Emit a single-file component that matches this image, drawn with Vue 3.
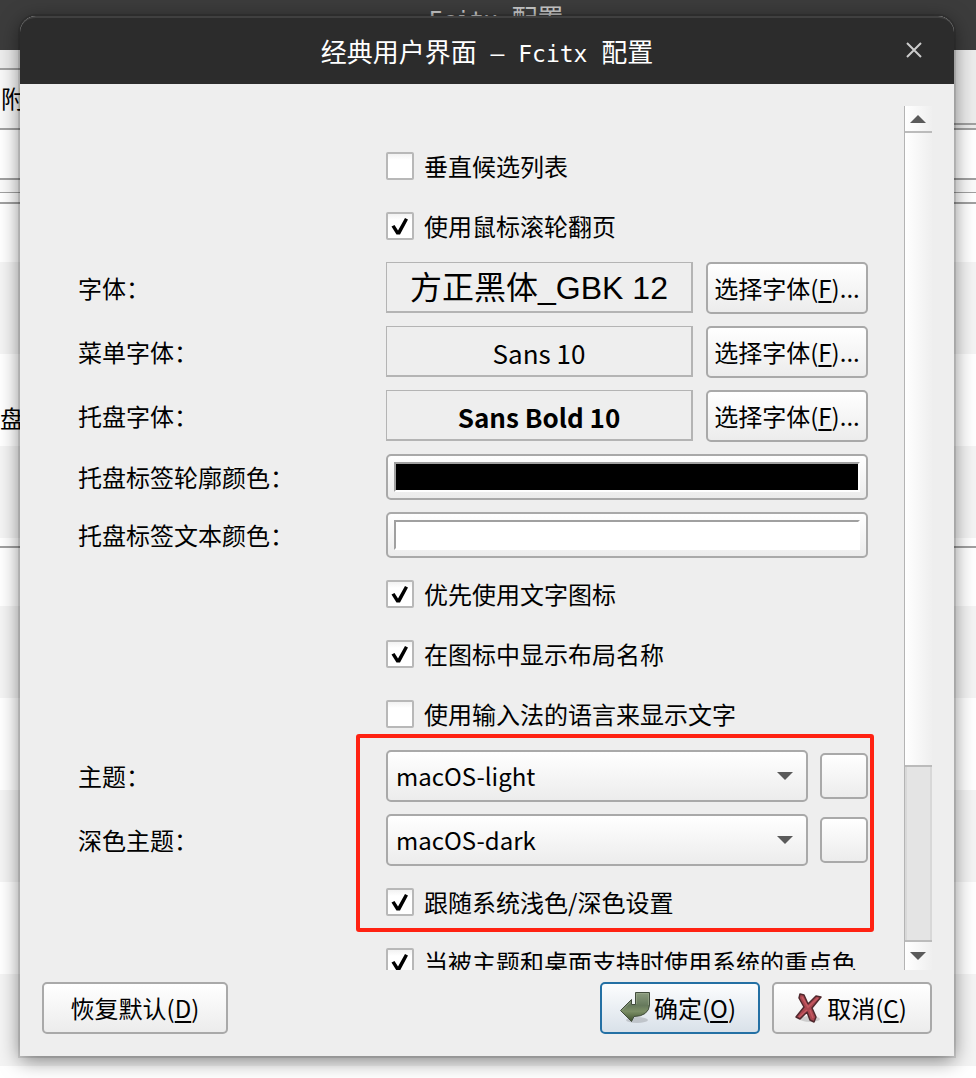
<script setup>
import { ref } from 'vue'

const topChecks = ref([
  { id: 'vertical', label: '垂直候选列表', on: false },
  { id: 'wheel', label: '使用鼠标滚轮翻页', on: true },
])
const fonts = [
  { id: 'font', label: '字体：', value: '方正黑体_GBK 12', kind: 'large' },
  { id: 'menu-font', label: '菜单字体：', value: 'Sans 10', kind: 'normal' },
  { id: 'tray-font', label: '托盘字体：', value: 'Sans Bold 10', kind: 'bold' },
]
const colors = [
  { id: 'outline', label: '托盘标签轮廓颜色：', kind: 'black' },
  { id: 'text', label: '托盘标签文本颜色：', kind: 'white' },
]
const iconChecks = ref([
  { id: 'text-icon', label: '优先使用文字图标', on: true },
  { id: 'layout-name', label: '在图标中显示布局名称', on: true },
  { id: 'im-language', label: '使用输入法的语言来显示文字', on: false },
])
const themes = [
  { id: 'theme', label: '主题：', value: 'macOS-light' },
  { id: 'dark-theme', label: '深色主题：', value: 'macOS-dark' },
]
const follow = ref(true)
const accent = ref(true)
const stripes = ['', '', '', '']
</script>

<template>
  <div class="desktop">
    <div class="back" aria-hidden="true">
      <div class="back-title"><span class="latin">Fcitx </span>配置</div>
      <div class="back-top">
        <div class="back-tab">附</div>
        <div class="back-side"></div>
      </div>
      <div class="back-search"></div>
      <div class="back-gap"></div>
      <div class="back-list first">
        <div class="cell short"></div>
        <div class="cell"></div>
        <div class="cell"><span>盘</span></div>
        <div class="cell"></div>
      </div>
      <div class="back-list second">
        <div class="cell short"></div>
        <div v-for="(s, i) in stripes" :key="i" class="cell"></div>
        <div class="cell"></div>
      </div>
    </div>

    <section class="dialog" role="dialog" aria-labelledby="dialog-title">
      <header class="titlebar">
        <h1 id="dialog-title">经典用户界面<span class="latin"> – Fcitx </span>配置</h1>
        <button class="close" type="button" aria-label="关闭">
          <svg viewBox="0 0 18 18" width="18" height="18"><path d="M2 2 16 16M16 2 2 16" /></svg>
        </button>
      </header>

      <div class="body">
        <div class="scroll-area">
          <form class="form" @submit.prevent>
            <label v-for="c in topChecks" :key="c.id" class="check">
              <span class="box">
                <input v-model="c.on" type="checkbox" />
                <svg v-if="c.on" viewBox="0 0 28 28"><path d="M5.5 14.5 8.5 13 12 18.5 19 6 22 7.5 14 22.500H10.500Z" /></svg>
              </span>
              {{ c.label }}
            </label>

            <div v-for="f in fonts" :key="f.id" class="row">
              <label class="name" :for="f.id">{{ f.label }}</label>
              <div class="font-field">
                <output class="font-value" :class="f.kind">{{ f.value }}</output>
                <button :id="f.id" class="btn choose" type="button">选择字体(<u>F</u>)...</button>
              </div>
            </div>

            <div v-for="c in colors" :key="c.id" class="row">
              <label class="name" :for="c.id">{{ c.label }}</label>
              <button :id="c.id" class="btn color" type="button"><span class="swatch" :class="c.kind"></span></button>
            </div>

            <label v-for="c in iconChecks" :key="c.id" class="check">
              <span class="box">
                <input v-model="c.on" type="checkbox" />
                <svg v-if="c.on" viewBox="0 0 28 28"><path d="M5.5 14.5 8.5 13 12 18.5 19 6 22 7.5 14 22.500H10.500Z" /></svg>
              </span>
              {{ c.label }}
            </label>

            <div class="theme-group">
              <div v-for="t in themes" :key="t.id" class="row">
                <label class="name" :for="t.id">{{ t.label }}</label>
                <div class="theme-field">
                  <span class="combo">
                    <select :id="t.id" class="btn"><option>{{ t.value }}</option></select>
                    <svg viewBox="0 0 16 8" width="16" height="8"><path d="M0 0H16L8 8Z" /></svg>
                  </span>
                  <button class="btn square" type="button" aria-label="配置"></button>
                </div>
              </div>
              <label class="check">
                <span class="box">
                  <input v-model="follow" type="checkbox" />
                  <svg v-if="follow" viewBox="0 0 28 28"><path d="M5.5 14.5 8.5 13 12 18.5 19 6 22 7.5 14 22.500H10.500Z" /></svg>
                </span>
                跟随系统浅色/深色设置
              </label>
              <div class="highlight"></div>
            </div>

            <label class="check">
              <span class="box">
                <input v-model="accent" type="checkbox" />
                <svg v-if="accent" viewBox="0 0 28 28"><path d="M5.5 14.5 8.5 13 12 18.5 19 6 22 7.5 14 22.500H10.500Z" /></svg>
              </span>
              当被主题和桌面支持时使用系统的重点色
            </label>
          </form>

          <div class="scrollbar">
            <button type="button" class="arrow up" aria-label="向上滚动">
              <svg viewBox="0 0 16 8" width="16" height="8"><path d="M0 8H16L8 0Z" /></svg>
            </button>
            <div class="track"></div>
            <div class="thumb"></div>
            <button type="button" class="arrow down" aria-label="向下滚动">
              <svg viewBox="0 0 16 8" width="16" height="8"><path d="M0 0H16L8 8Z" /></svg>
            </button>
          </div>
        </div>

        <footer class="actions">
          <button class="btn restore" type="button">恢复默认(<u>D</u>)</button>
          <button class="btn action ok" type="button">
            <svg viewBox="0 0 32 32" width="32" height="32">
              <defs>
                <linearGradient id="ok-fill" x1="0" y1="0" x2="0" y2="1">
                  <stop offset="0" stop-color="#8b9c7f" />
                  <stop offset="0.45" stop-color="#66795c" />
                  <stop offset="0.65" stop-color="#7c8f66" />
                  <stop offset="1" stop-color="#3c4f2c" />
                </linearGradient>
              </defs>
              <ellipse cx="17" cy="28" rx="11" ry="3" fill="#000" opacity=".15" />
              <path d="M15.500 .5H29.500V13Q29.500 18 25 21.500Q21 24.500 14 24.500L11.500 29.500 .5 18.500 11.500 7.500V12.500H15.500Z" fill="url(#ok-fill)" stroke="#414c3c" />
              <path d="M16.500 12V1.500H28.500V13M10.500 10 2 18.500" fill="none" stroke="#a5b498" opacity=".5" />
            </svg>
            <span>确定(<u>O</u>)</span>
          </button>
          <button class="btn action" type="button">
            <svg viewBox="0 0 32 32" width="32" height="32">
              <ellipse cx="17" cy="27" rx="10" ry="3" fill="#000" opacity=".15" />
              <path d="M7 2 11 3 15 12 23 4 28 5 19 16 23 25 21 30 17 28 14 20 7 27 3 25 11 15 6 6Z" fill="#aa464f" stroke="#50282d" stroke-width="1.500" stroke-linejoin="round" />
              <path d="M9 5 15 15 25 6M14 18 6 25M17 18 20 26" fill="none" stroke="#c45a62" stroke-width="1.500" />
            </svg>
            <span>取消(<u>C</u>)</span>
          </button>
        </footer>
      </div>
    </section>
  </div>
</template>

<style>
body {
  margin: 0;
}
</style>

<style scoped>
* {
  box-sizing: border-box;
}
.desktop {
  position: relative;
  height: 100vh;
  padding: 16px 22px 22px 20px;
  overflow: hidden;
  color: #000;
  font-family: "Noto Sans CJK SC", sans-serif;
  font-size: 24px;
  line-height: 36px;
}
button,
select {
  color: inherit;
  font: inherit;
}

/* window behind the dialog */
.back {
  position: absolute;
  inset: 0;
  display: flex;
  flex-direction: column;
  background: #fff;
}
.back-title {
  height: 50px;
  padding-left: 16px;
  background: #3c3c3c;
  color: #c8c8c8;
  font-size: 26px;
  line-height: 34px;
  text-align: center;
}
.latin {
  font-family: "DejaVu Sans Mono", monospace;
  font-size: 23px;
  white-space: pre;
}
.back-top {
  display: flex;
  justify-content: space-between;
  height: 80px;
  background: #ececec;
  border-bottom: 2px solid #a0a0a0;
}
.back-tab {
  width: 60px;
  margin-top: 18px;
  padding: 10px 1px;
  background: #f8f8f8;
  border-top: 2px solid #a0a0a0;
}
.back-side {
  width: 60px;
  height: 75px;
  border-bottom: 2px solid #a0a0a0;
}
.back-search {
  height: 50px;
  background: #fff;
  border-bottom: 2px solid #a0a0a0;
}
.back-gap {
  height: 13px;
  background: #fafafa;
  border-bottom: 1px solid #a0a0a0;
}
.back-list.first {
  margin-top: 9px;
  height: 346px;
  border-top: 2px solid #a0a0a0;
  border-bottom: 2px solid #a0a0a0;
}
.cell {
  height: 92px;
}
.cell.short {
  height: 58px;
}
.cell:nth-child(even) {
  background: #f4f4f4;
}
.cell span {
  display: block;
  padding-top: 46px;
}

/* dialog frame */
.dialog {
  position: relative;
  display: flex;
  flex-direction: column;
  height: 100%;
  background: #eee;
  border-radius: 16px 16px 0 0;
  box-shadow: 0 0 0 2px rgba(0, 0, 0, 0.1), 0 4px 20px rgba(0, 0, 0, 0.5);
}
.titlebar {
  display: grid;
  grid-template-columns: 80px 1fr 80px;
  align-items: center;
  height: 68px;
  background: #2c2c2c;
  border-top: 2px solid #404040;
  border-radius: 16px 16px 0 0;
  color: #fff;
}
.titlebar h1 {
  grid-column: 2;
  margin: 0;
  padding-top: 3px;
  font-size: 26px;
  font-weight: 400;
  line-height: 38px;
  text-align: center;
}
.close {
  display: flex;
  justify-content: center;
  padding: 0 0 2px;
  background: none;
  border: 0;
}
.close path {
  fill: none;
  stroke: #ccc;
  stroke-width: 2;
}
.body {
  display: flex;
  flex: 1;
  flex-direction: column;
  gap: 12px;
  min-height: 0;
  padding: 22px;
}
.scroll-area {
  display: flex;
  flex: 1;
  gap: 30px;
  min-height: 0;
}

/* form */
.form {
  display: flex;
  flex: 1;
  flex-direction: column;
  gap: 12px;
  padding: 36px 6px 0 36px;
  overflow: hidden;
}
.form > * {
  flex-shrink: 0;
}
.row {
  display: grid;
  grid-template-columns: 308px 1fr;
  align-items: center;
}
.check {
  display: flex;
  align-items: center;
  gap: 10px;
  height: 48px;
  margin-left: 308px;
  white-space: nowrap;
}
.box {
  display: grid;
  width: 28px;
  height: 28px;
}
.box > * {
  grid-area: 1 / 1;
}
.box input {
  width: 28px;
  height: 28px;
  margin: 0;
  appearance: none;
  background: linear-gradient(#f2f2f2, #fff 6px);
  border: 2px solid #b8b8b8;
  border-radius: 2px;
}
.box svg {
  pointer-events: none;
}
.btn {
  padding: 0;
  background: linear-gradient(#fff, #ececec);
  border: 2px solid #a9a9a9;
  border-radius: 5px;
  white-space: nowrap;
}
u {
  text-decoration-thickness: 2px;
  text-underline-offset: 3px;
  text-decoration-skip-ink: none;
}
.font-field {
  display: grid;
  grid-template-columns: 1fr 162px;
  gap: 13px;
}
.font-value {
  height: 51px;
  border: 1px solid #b4b4b4;
  border-right-width: 2px;
  border-bottom-width: 2px;
  font-size: 26px;
  line-height: 52px;
  text-align: center;
  white-space: nowrap;
}
.font-value.large {
  font-family: "Liberation Sans", "Noto Sans CJK SC", sans-serif;
  font-size: 32px;
  line-height: 50px;
}
.font-value.bold {
  font-weight: 700;
}
.choose {
  height: 52px;
}
.color {
  display: flex;
  height: 46px;
  padding: 6px;
}
.swatch {
  flex: 1;
  border: 2px solid #fff;
  border-top-color: #a0a0a0;
  border-left-color: #a0a0a0;
}
.swatch.black {
  background: #000;
}
.swatch.white {
  background: #fff;
}
.theme-group {
  position: relative;
  display: flex;
  flex-direction: column;
  gap: 12px;
}
.theme-field {
  display: grid;
  grid-template-columns: 1fr 48px;
  gap: 12px;
  align-items: center;
}
.combo {
  display: grid;
  align-items: center;
}
.combo > * {
  grid-area: 1 / 1;
}
.combo select {
  width: 100%;
  height: 52px;
  padding: 0 8px;
  appearance: none;
}
.combo svg {
  justify-self: end;
  margin-right: 15px;
  pointer-events: none;
}
.combo path,
.arrow path {
  fill: #5a5a5a;
}
.square {
  height: 46px;
}
.highlight {
  position: absolute;
  inset: -16px -6px -6px 278px;
  border: 4px solid #ff2212;
  border-radius: 3px;
  pointer-events: none;
}

/* scroll bar */
.scrollbar {
  display: flex;
  flex-direction: column;
  width: 28px;
  border-left: 1px solid #b4b4b4;
  background: linear-gradient(90deg, #fff, #efefef);
}
.arrow {
  display: flex;
  align-items: center;
  justify-content: center;
  height: 28px;
  padding: 0 2px 0 0;
  background: none;
  border: 0;
}
.arrow.up {
  height: 27px;
  border-bottom: 2px solid #bbb;
}
.track {
  flex: 634;
}
.thumb {
  flex: 174;
  background: #e4e4e4;
  border: solid #bbb;
  border-width: 2px 0;
  box-shadow: inset 2px 0 #d8d8d8, inset -2px 0 #d8d8d8;
}

/* dialog buttons */
.actions {
  display: flex;
  gap: 12px;
}
.actions .btn {
  height: 52px;
}
.restore {
  width: 186px;
  margin-right: auto;
}
.action {
  display: flex;
  align-items: center;
  justify-content: center;
  gap: 2px;
  width: 160px;
}
.actions .action {
  padding-right: 4px;
}
.ok {
  background: linear-gradient(#fcfdfe, #d9e1e9);
  border-color: #2470a4;
}
</style>
